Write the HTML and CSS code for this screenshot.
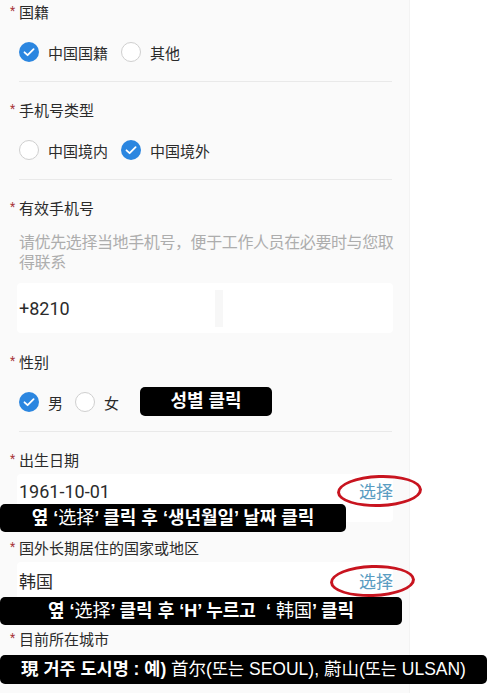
FILE: index.html
```html
<!DOCTYPE html>
<html lang="zh-CN">

<head>
    <meta charset="UTF-8">
    <meta name="viewport" content="width=device-width, initial-scale=1.0">
    <title>信息登记</title>
    <link rel="stylesheet" href="styles.css">
</head>

<body>
    <div id="page">
        <div id="form">
            <div class="field">
                <div class="label"><span class="req">*</span>国籍</div>
                <div class="radios">
                    <span class="radio on"><svg viewBox="0 0 20 20"><path d="M5.5 10.3 L8.6 13.2 L14.6 7.2" /></svg></span>
                    <span class="opt">中国国籍</span>
                    <span class="radio"></span>
                    <span class="opt">其他</span>
                </div>
                <div class="line"></div>
            </div>

            <div class="field">
                <div class="label"><span class="req">*</span>手机号类型</div>
                <div class="radios">
                    <span class="radio"></span>
                    <span class="opt">中国境内</span>
                    <span class="radio on"><svg viewBox="0 0 20 20"><path d="M5.5 10.3 L8.6 13.2 L14.6 7.2" /></svg></span>
                    <span class="opt">中国境外</span>
                </div>
                <div class="line"></div>
            </div>

            <div class="field phone">
                <div class="label"><span class="req">*</span>有效手机号</div>
                <div class="hint">请优先选择当地手机号，便于工作人员在必要时与您取得联系</div>
                <div class="box">
                    <span class="value">+8210</span>
                    <span class="split"></span>
                </div>
            </div>

            <div class="field">
                <div class="label"><span class="req">*</span>性别</div>
                <div class="radios">
                    <span class="radio on"><svg viewBox="0 0 20 20"><path d="M5.5 10.3 L8.6 13.2 L14.6 7.2" /></svg></span>
                    <span class="opt narrow">男</span>
                    <span class="radio"></span>
                    <span class="opt">女</span>
                </div>
                <div class="line"></div>
            </div>

            <div class="field birth">
                <div class="label"><span class="req">*</span>出生日期</div>
                <div class="box pick">
                    <span class="value">1961-10-01</span>
                    <span class="choose">选择</span>
                </div>
            </div>

            <div class="field country">
                <div class="label"><span class="req">*</span>国外长期居住的国家或地区</div>
                <div class="box pick">
                    <span class="value cn">韩国</span>
                    <span class="choose">选择</span>
                </div>
            </div>

            <div class="field">
                <div class="label"><span class="req">*</span>目前所在城市</div>
            </div>
        </div>

        <!-- 설명용 표시 -->
        <div class="ring" id="ring-birth"></div>
        <div class="ring" id="ring-country"></div>

        <div class="note" id="note-sex">성별 클릭</div>
        <div class="note" id="note-birth">옆 ‘<span class="thin">选择</span>’ 클릭 후 ‘생년월일’ 날짜 클릭</div>
        <div class="note" id="note-country">옆 ‘<span class="thin">选择</span>’ 클릭 후 ‘H’ 누르고 &nbsp;‘ <span class="thin">韩国</span>’ 클릭</div>
        <div class="note" id="note-city">現 거주 도시명 : 예) <span class="thin">首尔(또는 SEOUL), 蔚山(또는 ULSAN)</span></div>
    </div>
</body>

</html>
```

FILE: styles.css
```css
body {
    margin: 0;
    background: #fff;
    font-family: Roboto, "Noto Sans CJK SC", sans-serif;
    color: #333;
}

#page {
    position: relative;
    width: 495px;
    height: 693px;
    overflow: hidden;
}

#form {
    width: 410px;
    height: 693px;
    box-sizing: border-box;
    padding-left: 10px;
    background: #fafafa;
    border-right: 1px solid #f3f3f3;
}

.field {
    margin-bottom: 16px;
}

.label {
    height: 26px;
    line-height: 26px;
    font-size: 15px;
    color: #2b2b2b;
}

.req {
    display: inline-block;
    width: 9px;
    font-size: 12px;
    color: #a8353a;
    vertical-align: top;
    line-height: 22px;
}

.radios {
    display: flex;
    align-items: center;
    height: 52px;
    margin-left: 9px;
}

.radio {
    width: 20px;
    height: 20px;
    box-sizing: border-box;
    border: 1px solid #cfcfcf;
    border-radius: 50%;
    background: #fff;
    margin-right: 9px;
}

.radio.on {
    border: none;
    background: #2b86e0;
}

.radio svg {
    display: block;
    width: 20px;
    height: 20px;
}

.radio svg path {
    fill: none;
    stroke: #fff;
    stroke-width: 1.8;
    stroke-linecap: round;
    stroke-linejoin: round;
}

.opt {
    font-size: 15px;
    color: #2b2b2b;
    margin-right: 13px;
}

.opt.narrow {
    margin-right: 12px;
}

.line {
    height: 1px;
    margin: 3px 17px 0 9px;
    background: #e9e9e9;
}

.hint {
    width: 380px;
    margin: 9px 0 0 9px;
    font-family: "Noto Sans CJK SC", sans-serif;
    font-size: 16px;
    letter-spacing: -0.4px;
    line-height: 20px;
    color: #adadad;
}

.box {
    display: flex;
    align-items: center;
    width: 376px;
    height: 50px;
    margin: 12px 0 0 7px;
    padding-left: 2px;
    box-sizing: border-box;
    background: #fff;
    border-radius: 4px;
}

.value {
    font-size: 18px;
    color: #2b2b2b;
    width: 196px;
}

.value.cn {
    font-size: 17px;
}

.split {
    width: 8px;
    height: 37px;
    background: #f7f7f7;
}

.phone {
    margin-bottom: 17px;
}

.box.pick {
    align-items: flex-start;
    justify-content: space-between;
    margin-top: 0;
    line-height: 24px;
}

.birth {
    margin-bottom: 14px;
}

.birth .box {
    height: 48px;
    padding-top: 6px;
}

.country {
    margin-bottom: 15px;
}

.country .box {
    padding-top: 8px;
}

.choose {
    font-size: 17px;
    color: #5a9cc2;
}

.ring {
    position: absolute;
    width: 85px;
    height: 32px;
    box-sizing: border-box;
    border: 3px solid #c8141f;
    border-radius: 50%;
    transform: rotate(-2deg);
}

#ring-birth {
    left: 337px;
    top: 475px;
}

#ring-country {
    left: 330px;
    top: 565px;
}

.note {
    position: absolute;
    height: 29px;
    line-height: 29px;
    background: #000;
    color: #fff;
    border-radius: 5px;
    text-align: center;
    font-family: "Liberation Sans", "Noto Sans CJK KR", sans-serif;
    font-weight: bold;
    font-size: 18px;
    white-space: nowrap;
}

.note .thin {
    font-family: "Liberation Sans", "Noto Sans CJK SC", sans-serif;
    font-weight: normal;
}

#note-sex {
    left: 140px;
    top: 387px;
    width: 132px;
}

#note-birth {
    left: 0;
    top: 504px;
    width: 346px;
    height: 28px;
    line-height: 28px;
}

#note-country {
    left: 0;
    top: 597px;
    width: 402px;
    height: 28px;
    line-height: 28px;
}

#note-city {
    left: 0;
    top: 655px;
    width: 487px;
    font-size: 17.5px;
}
```
